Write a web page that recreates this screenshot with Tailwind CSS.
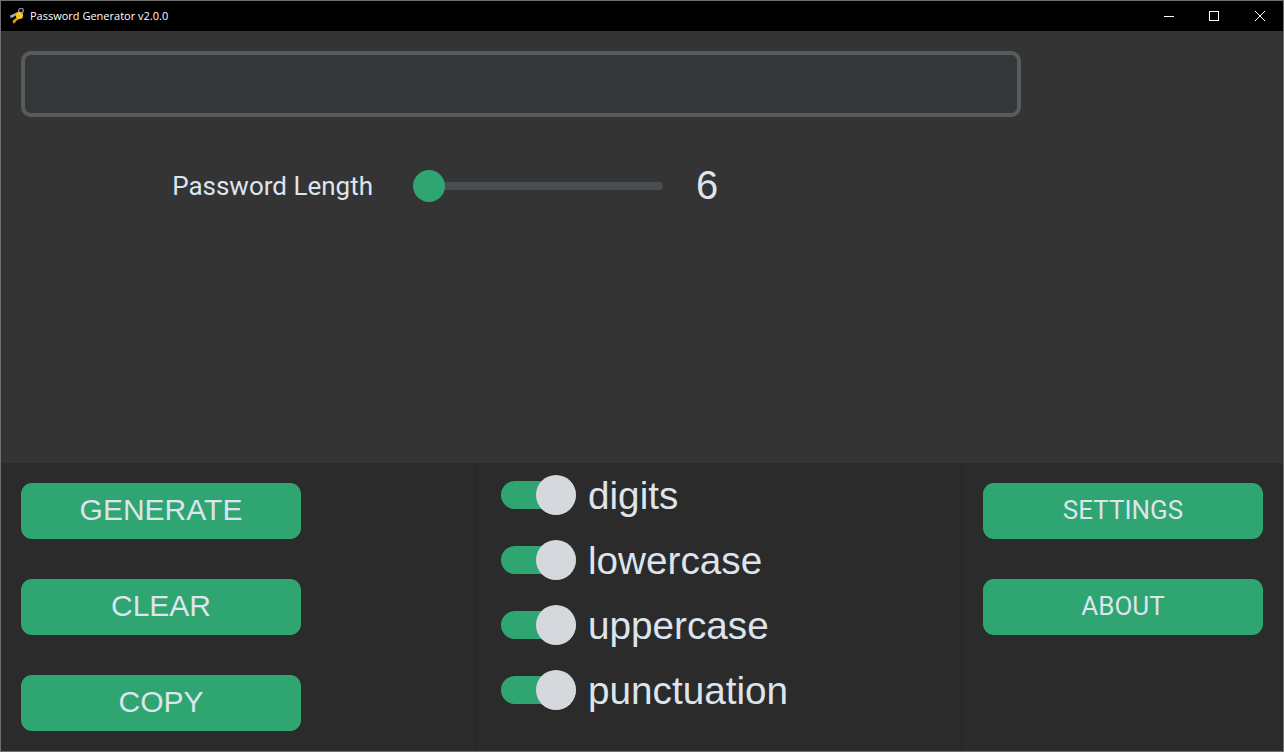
<!DOCTYPE html>
<html lang="en">
<head>
  <meta charset="UTF-8">
  <title>Password Generator v2.0.0</title>
  <script src="https://cdn.jsdelivr.net/npm/@tailwindcss/browser@4"></script>
</head>
<body class="bg-[#343434] overflow-hidden">
  <div class="w-[1284px] h-[752px] flex flex-col border border-[#6f6f6f] border-t-0">

    <!-- Title bar -->
    <div class="h-[31px] shrink-0 bg-black flex items-center justify-between border-t border-[#6f6f6f]">
      <div class="flex items-center pl-[8px] gap-[5px]">
        <svg width="16" height="16" viewBox="0 0 16 16">
          <circle cx="12" cy="2.5" r="2.3" fill="none" stroke="#8d9194" stroke-width="1.3"/>
          <path d="M10 3.5 L1 7.5 L1.5 10 L3.5 9.5 L10.5 5.5Z" fill="#9fa9ae"/>
          <path d="M8.5 8.5 L3.5 13 L4.5 15.5 L6 15 L7 13 L11 10.5Z" fill="#dd9f12"/>
          <circle cx="10.5" cy="7.5" r="3.6" fill="#fcc62a"/>
        </svg>
        <span class="text-[11px] text-white font-['Open_Sans',sans-serif]">Password Generator v2.0.0</span>
      </div>
      <div class="flex items-center h-full">
        <div class="w-[44px] h-full flex items-center justify-center">
          <svg width="10" height="10" viewBox="0 0 10 10"><path d="M0 5.5H10" stroke="#fff" stroke-width="1"/></svg>
        </div>
        <div class="w-[46px] h-full flex items-center justify-center">
          <svg width="10" height="10" viewBox="0 0 10 10"><rect x="0.5" y="0.5" width="9" height="9" fill="none" stroke="#fff" stroke-width="1"/></svg>
        </div>
        <div class="w-[46px] h-full flex items-center justify-center">
          <svg width="10" height="10" viewBox="0 0 10 10"><path d="M0 0L10 10M10 0L0 10" stroke="#fff" stroke-width="1"/></svg>
        </div>
      </div>
    </div>

    <!-- Top area -->
    <div class="h-[432px] shrink-0 pt-[20px] pl-[20px]">
      <div class="w-[1000px] h-[66px] rounded-[10px] border-[4px] border-[#565b5e] bg-[#343638]"></div>
      <div class="mt-[49px] h-[40px] flex items-center">
        <span class="w-[352px] text-right text-[26px] text-[#dce4ee] font-['Roboto',sans-serif]">Password Length</span>
        <div class="ml-[40px] w-[250px] h-[8px] rounded-full bg-[#4a4d50] relative">
          <div class="absolute left-0 top-[-12px] w-[32px] h-[32px] rounded-full bg-[#2fa572]"></div>
        </div>
        <span class="ml-[33px] mb-[2px] text-[40px] leading-none text-[#dce4ee] font-['Liberation_Sans',sans-serif]">6</span>
      </div>
    </div>

    <!-- Bottom panels -->
    <div class="flex-1 flex bg-[#2b2b2b]">
      <div class="w-[474px] shrink-0 pl-[20px] pt-[20px] flex flex-col gap-[40px]">
        <button class="w-[280px] h-[56px] pb-[3px] rounded-[11px] bg-[#2fa572] text-[30px] text-[#dce4ee] font-['Liberation_Sans',sans-serif]">GENERATE</button>
        <button class="w-[280px] h-[56px] pb-[3px] rounded-[11px] bg-[#2fa572] text-[30px] text-[#dce4ee] font-['Liberation_Sans',sans-serif]">CLEAR</button>
        <button class="w-[280px] h-[56px] pb-[3px] rounded-[11px] bg-[#2fa572] text-[30px] text-[#dce4ee] font-['Liberation_Sans',sans-serif]">COPY</button>
      </div>

      <div class="w-[487px] shrink-0 border-x border-[#242424] pl-[25px] pt-[12px] flex flex-col gap-[25px] text-[38.7px] leading-[40px] text-[#dce4ee] font-['Liberation_Sans',sans-serif]">
        <div class="flex items-center h-[40px]">
          <div class="relative w-[75px] h-[28px] rounded-full bg-[#2fa572]"><div class="absolute right-0 top-[-6px] w-[40px] h-[40px] rounded-full bg-[#d5d9de]"></div></div>
          <span class="ml-[12px] pt-[2px]">digits</span>
        </div>
        <div class="flex items-center h-[40px]">
          <div class="relative w-[75px] h-[28px] rounded-full bg-[#2fa572]"><div class="absolute right-0 top-[-6px] w-[40px] h-[40px] rounded-full bg-[#d5d9de]"></div></div>
          <span class="ml-[12px] pt-[2px]">lowercase</span>
        </div>
        <div class="flex items-center h-[40px]">
          <div class="relative w-[75px] h-[28px] rounded-full bg-[#2fa572]"><div class="absolute right-0 top-[-6px] w-[40px] h-[40px] rounded-full bg-[#d5d9de]"></div></div>
          <span class="ml-[12px] pt-[2px]">uppercase</span>
        </div>
        <div class="flex items-center h-[40px]">
          <div class="relative w-[75px] h-[28px] rounded-full bg-[#2fa572]"><div class="absolute right-0 top-[-6px] w-[40px] h-[40px] rounded-full bg-[#d5d9de]"></div></div>
          <span class="ml-[12px] pt-[2px]">punctuation</span>
        </div>
      </div>

      <div class="flex-1 pl-[21px] pt-[20px] flex flex-col gap-[40px]">
        <button class="w-[280px] h-[56px] pb-[2px] rounded-[11px] bg-[#2fa572] text-[26px] text-[#dce4ee] font-['Roboto',sans-serif]">SETTINGS</button>
        <button class="w-[280px] h-[56px] pb-[2px] rounded-[11px] bg-[#2fa572] text-[26px] text-[#dce4ee] font-['Roboto',sans-serif]">ABOUT</button>
      </div>
    </div>
  </div>
</body>
</html>
